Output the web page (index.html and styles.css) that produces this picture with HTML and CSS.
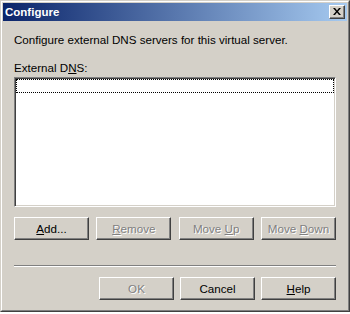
FILE: index.html
```html
<!DOCTYPE html>
<html lang="en">
<head>
  <meta charset="UTF-8" />
  <title>Configure</title>
  <link rel="stylesheet" href="styles.css">
</head>
<body>
  <div class="window">
    <div class="frame">
      <div class="titlebar">
        <span class="title">Configure</span>
        <button class="close-btn">
          <svg width="8" height="7" viewBox="0 0 8 7">
            <path d="M0 0h2l2 2.5L6 0h2L5 3.5 8 7H6L4 4.5 2 7H0l3-3.5z" fill="#000"/>
          </svg>
        </button>
      </div>

      <div class="content">
        <p class="intro">Configure external DNS servers for this virtual server.</p>
        <p class="label">External D<u>N</u>S:</p>
        <div class="listbox">
          <div class="focus-row"></div>
        </div>

        <div class="list-buttons">
          <button class="btn"><u>A</u>dd...</button>
          <button class="btn" disabled><u>R</u>emove</button>
          <button class="btn" disabled>Move <u>U</u>p</button>
          <button class="btn" disabled>Move <u>D</u>own</button>
        </div>

        <div class="separator"></div>

        <div class="dialog-buttons">
          <button class="btn" disabled>OK</button>
          <button class="btn">Cancel</button>
          <button class="btn"><u>H</u>elp</button>
        </div>
      </div>
    </div>
  </div>
</body>
</html>
```

FILE: styles.css
```css
* {
  margin: 0;
  padding: 0;
  box-sizing: border-box;
}

body {
  background-color: #ffffff;
  font-family: 'Liberation Sans', Arial, sans-serif;
  font-size: 11.6px;
  color: #000;
}

.window {
  width: 350px;
  height: 312px;
  background-color: #D4D0C8;
  border: 1px solid;
  border-color: #D4D0C8 #404040 #404040 #D4D0C8;
}

.frame {
  height: 100%;
  border: 1px solid;
  border-color: #ffffff #808080 #808080 #ffffff;
  padding: 1px;
}

.titlebar {
  height: 18px;
  display: flex;
  align-items: center;
  justify-content: space-between;
  padding: 0 2px 0 2px;
  background: linear-gradient(to right, #0A246A, #A6CAF0);
}

.title {
  color: #ffffff;
  font-weight: bold;
  font-size: 11.5px;
}

.close-btn {
  width: 16px;
  height: 14px;
  background-color: #D4D0C8;
  border: 1px solid;
  border-color: #ffffff #404040 #404040 #ffffff;
  box-shadow: inset -1px -1px 0 #808080;
  display: flex;
  align-items: center;
  justify-content: center;
  padding-bottom: 1px;
}

.content {
  padding: 12px 11px 0 11px;
}

.intro {
  line-height: 13px;
}

.label {
  line-height: 13px;
  margin-top: 15px;
}

.listbox {
  margin-top: 3px;
  height: 130px;
  background-color: #ffffff;
  border: 1px solid;
  border-color: #808080 #ffffff #ffffff #808080;
  box-shadow: inset 1px 1px 0 #404040, inset -1px -1px 0 #D4D0C8;
  padding: 1px;
}

.focus-row {
  height: 14px;
  border: 1px dotted #000;
}

.list-buttons {
  display: flex;
  justify-content: space-between;
  margin-top: 10px;
}

.dialog-buttons {
  display: flex;
  justify-content: flex-end;
  gap: 6px;
  margin-top: 10px;
}

.btn {
  width: 75px;
  height: 23px;
  background-color: #D4D0C8;
  font-family: 'Liberation Sans', Arial, sans-serif;
  font-size: 11.6px;
  color: #000;
  border: 1px solid;
  border-color: #ffffff #404040 #404040 #ffffff;
  box-shadow: inset -1px -1px 0 #808080;
}

.btn:disabled {
  color: #808080;
  text-shadow: 1px 1px 0 #ffffff;
}

.separator {
  margin-top: 25px;
  height: 2px;
  border-top: 1px solid #808080;
  border-bottom: 1px solid #ffffff;
}
```
